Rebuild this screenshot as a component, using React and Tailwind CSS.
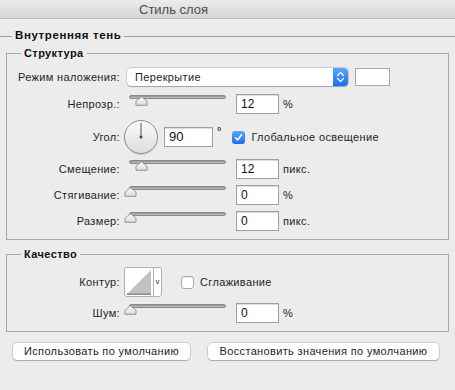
import React from "react";

const F = { fontFamily: '"Liberation Sans", Arial, sans-serif' };

function Slider({ pos }) {
  return (
    <div className="relative w-[102px] h-[12px] mb-[8px] shrink-0">
      <div className="absolute left-[5px] right-0 top-[1px] h-[4px] rounded-full bg-gradient-to-b from-[#8f8f8f] to-[#c4c4c4] border border-[#8a8a8a]" />
      <svg
        className="absolute top-[2px]"
        style={{ left: pos }}
        width="13"
        height="10"
        viewBox="0 0 13 10"
      >
        <defs>
          <linearGradient id="tg" x1="0" y1="0" x2="0" y2="1">
            <stop offset="0" stopColor="#ffffff" />
            <stop offset="1" stopColor="#d8d8d8" />
          </linearGradient>
        </defs>
        <path
          d="M1 9.3 L1 5.2 L6.5 0.7 L12 5.2 L12 9.3 Z"
          fill="url(#tg)"
          stroke="#8a8a8a"
          strokeWidth="0.9"
          strokeLinejoin="round"
        />
      </svg>
    </div>
  );
}

function NumInput({ value, w = "w-[43px]", cls = "" }) {
  return (
    <div
      className={`${w} h-[20px] bg-white border border-[#a0a0a0] shadow-[inset_0_1px_1px_rgba(0,0,0,0.15)] flex items-center pl-[4px] text-[12px] text-[#111] ${cls}`}
    >
      {value}
    </div>
  );
}

function Label({ children }) {
  return (
    <div className="w-[113px] shrink-0 text-right text-[11px] tracking-[0.35px] text-[#1e1e1e]">
      {children}
    </div>
  );
}

function SliderRow({ label, pos, value, unit, cls }) {
  return (
    <div className={`flex items-center h-[20px] ${cls}`}>
      <Label>{label}</Label>
      <div className="ml-[4px]">
        <Slider pos={pos} />
      </div>
      <NumInput value={value} cls="ml-[10px]" />
      <span className="ml-[4px] text-[11px] tracking-[0.35px] text-[#1e1e1e]">{unit}</span>
    </div>
  );
}

function Group({ title, children, cls }) {
  return (
    <div className={`relative mx-[6px] border border-[#a8a8a8] ${cls}`}>
      <span className="absolute -top-[8px] left-[14px] px-[3px] bg-[#ececec] text-[11px] tracking-[0.4px] font-bold text-[#111] leading-[14px]">
        {title}
      </span>
      {children}
    </div>
  );
}

export default function App() {
  return (
    <div className="w-[455px] h-[390px] bg-[#ececec] overflow-hidden" style={F}>
      {/* title bar */}
      <div className="h-[19px] bg-gradient-to-b from-[#ebebeb] to-[#d6d6d6] border-b border-[#b9b9b9] flex items-center pl-[139px]">
        <span className="text-[13px] text-[#4c4c4c] leading-none">Стиль слоя</span>
      </div>

      {/* section heading */}
      <div className="flex items-center mt-[10px] h-[14px]">
        <div className="w-[12px] h-px bg-[#9d9d9d]" />
        <span className="mx-[3px] text-[11.5px] tracking-[0.6px] font-bold text-[#111]">Внутренняя тень</span>
        <div className="flex-1 h-px bg-[#9d9d9d]" />
      </div>

      {/* Structure */}
      <Group title="Структура" cls="mt-[10px] pt-[14px] pb-[8px]">
        <div className="flex items-center h-[18px]">
          <Label>Режим наложения:</Label>
          <div className="ml-[7px] w-[221px] h-[18px] flex rounded-[4px] bg-white shadow-[0_0_0_0.5px_rgba(0,0,0,0.25),0_1px_1px_rgba(0,0,0,0.2)]">
            <div className="flex-1 flex items-center pl-[8px] text-[11px] tracking-[0.35px] text-[#1e1e1e]">
              Перекрытие
            </div>
            <div className="w-[15px] h-full rounded-r-[4px] bg-gradient-to-b from-[#5aa6fb] to-[#1a6cf2] flex items-center justify-center">
              <svg width="9" height="12" viewBox="0 0 9 12">
                <path d="M1.5 4.5 L4.5 1.5 L7.5 4.5" fill="none" stroke="white" strokeWidth="1.3" strokeLinecap="round" strokeLinejoin="round" />
                <path d="M1.5 7.5 L4.5 10.5 L7.5 7.5" fill="none" stroke="white" strokeWidth="1.3" strokeLinecap="round" strokeLinejoin="round" />
              </svg>
            </div>
          </div>
          <div className="ml-[7px] w-[35px] h-[18px] bg-white border border-[#a8a8a8]" />
        </div>

        <SliderRow label="Непрозр.:" pos={11} value="12" unit="%" cls="mt-[8px]" />

        <div className="flex items-center h-[36px] mt-[5px]">
          <Label>Угол:</Label>
          <div className="ml-[4px] w-[34px] h-[34px] rounded-full border border-[#8d8d8d] bg-gradient-to-b from-[#fbfbfb] to-[#dcdcdc] shadow-[0_1px_1px_rgba(0,0,0,0.15)] flex items-center justify-center">
            <svg width="34" height="34" viewBox="0 0 34 34">
              <line x1="17" y1="17" x2="17" y2="2" stroke="#444" strokeWidth="1" />
              <circle cx="17" cy="17" r="1.6" fill="#444" />
            </svg>
          </div>
          <NumInput value="90" w="w-[49px]" cls="ml-[6px] text-[13px]" />
          <span className="ml-[4px] self-start mt-[7px] text-[11px] font-bold leading-none text-[#333]">°</span>
          <div className="ml-[11px] w-[13px] h-[13px] rounded-[3px] bg-gradient-to-b from-[#5aa6fb] to-[#1a6cf2] flex items-center justify-center">
            <svg width="9" height="9" viewBox="0 0 9 9">
              <path d="M1.5 4.8 L3.6 6.9 L7.5 1.8" fill="none" stroke="white" strokeWidth="1.6" strokeLinecap="round" strokeLinejoin="round" />
            </svg>
          </div>
          <span className="ml-[6px] text-[11px] tracking-[0.35px] text-[#1e1e1e]">Глобальное освещение</span>
        </div>

        <SliderRow label="Смещение:" pos={11} value="12" unit="пикс." cls="mt-[4px]" />
        <SliderRow label="Стягивание:" pos={0} value="0" unit="%" cls="mt-[6px]" />
        <SliderRow label="Размер:" pos={0} value="0" unit="пикс." cls="mt-[6px]" />
      </Group>

      {/* Quality */}
      <Group title="Качество" cls="mt-[14px] pt-[12px] pb-[8px]">
        <div className="flex items-center h-[30px]">
          <Label>Контур:</Label>
          <div className="ml-[4px] w-[38px] h-[30px] flex bg-white border border-[#b0b0b0] rounded-[3px] overflow-hidden">
            <svg width="28" height="28" viewBox="0 0 28 28" className="shrink-0">
              <polygon points="2,26 26,2 26,26" fill="#c2c2c2" />
              <rect x="2" y="25.5" width="24" height="1.5" fill="#8a8a8a" />
            </svg>
            <div className="flex-1 border-l border-[#b0b0b0] flex items-center justify-center text-[8px] text-[#333]">
              v
            </div>
          </div>
          <div className="ml-[19px] w-[13px] h-[13px] rounded-[3px] bg-white border border-[#a8a8a8] shadow-[inset_0_1px_1px_rgba(0,0,0,0.08)]" />
          <span className="ml-[6px] text-[11px] tracking-[0.35px] text-[#1e1e1e]">Сглаживание</span>
        </div>
        <SliderRow label="Шум:" pos={0} value="0" unit="%" cls="mt-[6px]" />
      </Group>

      {/* buttons */}
      <div className="flex mt-[11px] px-[13px] gap-[18px]">
        <div className="w-[177px] h-[17px] rounded-[4px] bg-white shadow-[0_0_0_0.5px_rgba(0,0,0,0.25),0_1px_1px_rgba(0,0,0,0.18)] flex items-center justify-center text-[11px] tracking-[0.35px] text-[#1e1e1e]">
          Использовать по умолчанию
        </div>
        <div className="w-[231px] h-[17px] rounded-[4px] bg-white shadow-[0_0_0_0.5px_rgba(0,0,0,0.25),0_1px_1px_rgba(0,0,0,0.18)] flex items-center justify-center text-[11px] tracking-[0.35px] text-[#1e1e1e]">
          Восстановить значения по умолчанию
        </div>
      </div>
    </div>
  );
}
